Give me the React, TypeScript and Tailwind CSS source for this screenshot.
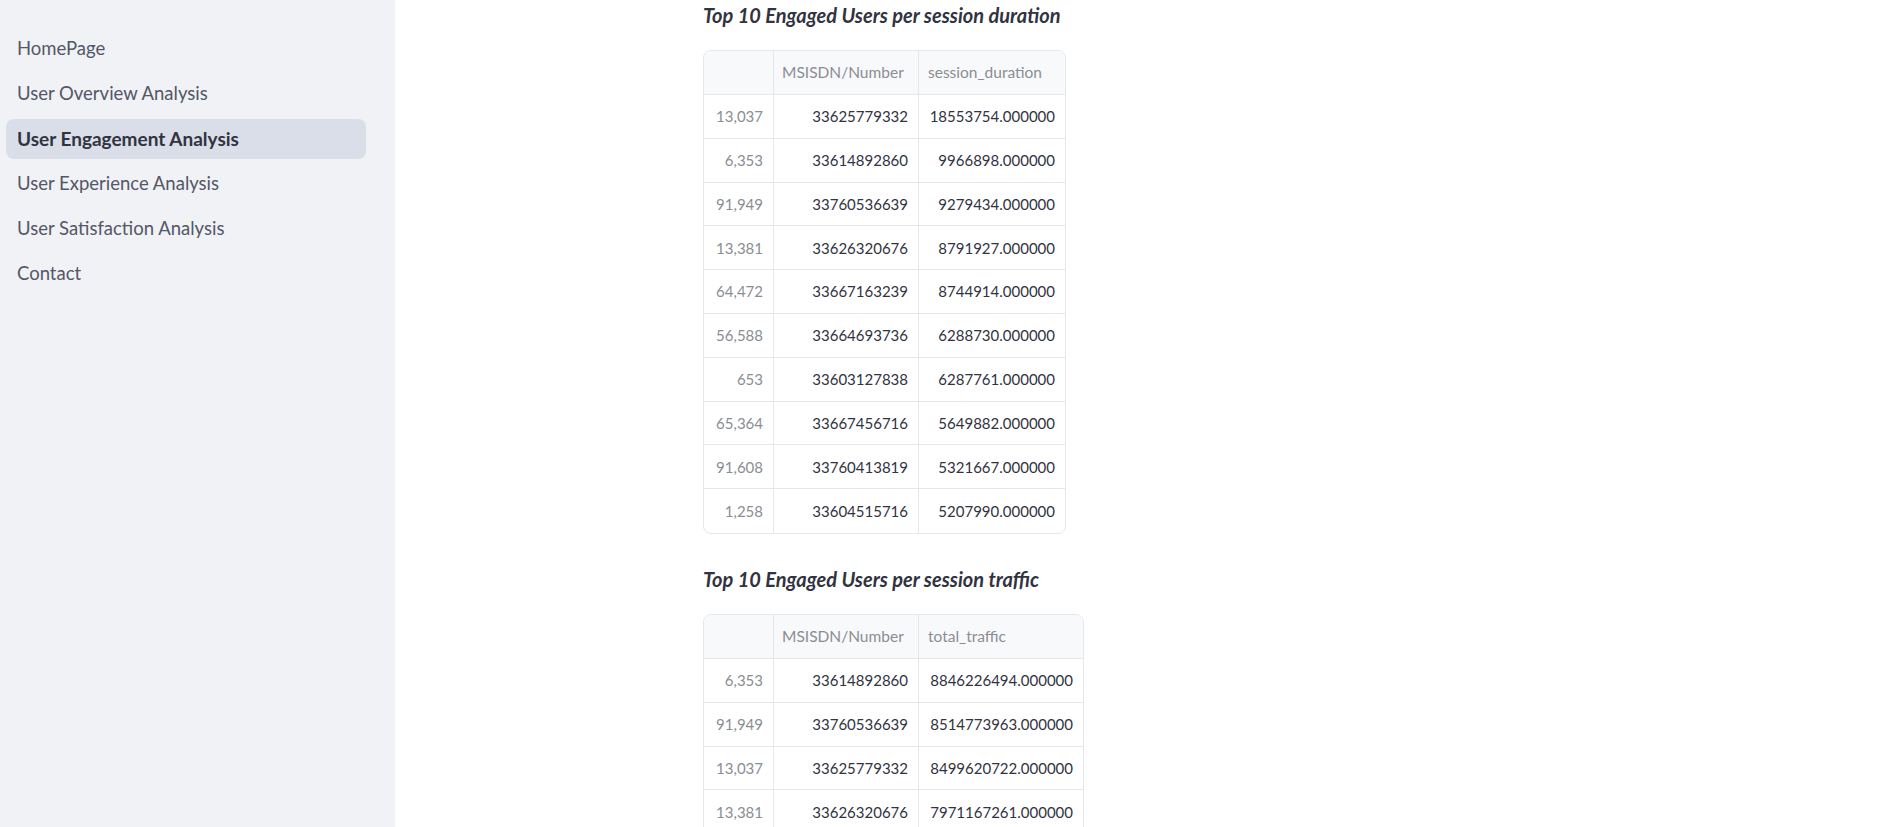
const navItems = [
  "HomePage",
  "User Overview Analysis",
  "User Engagement Analysis",
  "User Experience Analysis",
  "User Satisfaction Analysis",
  "Contact",
];

const durationRows = [
  ["13,037", "33625779332", "18553754.000000"],
  ["6,353", "33614892860", "9966898.000000"],
  ["91,949", "33760536639", "9279434.000000"],
  ["13,381", "33626320676", "8791927.000000"],
  ["64,472", "33667163239", "8744914.000000"],
  ["56,588", "33664693736", "6288730.000000"],
  ["653", "33603127838", "6287761.000000"],
  ["65,364", "33667456716", "5649882.000000"],
  ["91,608", "33760413819", "5321667.000000"],
  ["1,258", "33604515716", "5207990.000000"],
];

const trafficRows = [
  ["6,353", "33614892860", "8846226494.000000"],
  ["91,949", "33760536639", "8514773963.000000"],
  ["13,037", "33625779332", "8499620722.000000"],
  ["13,381", "33626320676", "7971167261.000000"],
  ["13,994", "33626951063", "7891110608.000000"],
  ["92,923", "33761273929", "7770043342.000000"],
  ["76,363", "33675877202", "7467498864.000000"],
  ["37,052", "33650730924", "7223375654.000000"],
  ["63,028", "33665986720", "7202029946.000000"],
  ["92,577", "33760992855", "6989489838.000000"],
];

const DataTable = ({
  column,
  rows,
  lastWidth,
}: {
  column: string;
  rows: string[][];
  lastWidth: string;
}) => (
  <div className="inline-block rounded-lg border border-[#e6e7ea] overflow-hidden bg-white text-[15px]">
    <div className="flex h-[44px] bg-[#f8f9fb] border-b border-[#e6e7ea] text-[#8b8d94] text-[15.5px]">
      <div className="w-[70px] border-r border-[#e6e7ea]" />
      <div className="w-[145px] border-r border-[#e6e7ea] flex items-center px-[8px]">
        MSISDN/Number
      </div>
      <div className={`${lastWidth} flex items-center px-[9px]`}>{column}</div>
    </div>
    {rows.map((r, i) => (
      <div
        key={i}
        className={`flex h-[43.8px] ${i < rows.length - 1 ? "border-b border-[#e6e7ea]" : ""}`}
      >
        <div className="w-[70px] border-r border-[#e6e7ea] flex items-center justify-end px-[10px] text-[#8b8d94]">
          {r[0]}
        </div>
        <div className="w-[145px] border-r border-[#e6e7ea] flex items-center justify-end px-[10px] text-[#31333f]">
          {r[1]}
        </div>
        <div className={`${lastWidth} flex items-center justify-end px-[10px] text-[#31333f]`}>
          {r[2]}
        </div>
      </div>
    ))}
  </div>
);

export default function App() {
  return (
    <div
      className="flex h-[827px] w-full overflow-hidden bg-white"
      style={{ fontFamily: "Lato, 'Noto Sans', sans-serif" }}
    >
      <aside className="w-[395px] shrink-0 bg-[#f0f2f6] pt-[29px] px-[6px]">
        <nav className="flex flex-col gap-[5px] w-[360px]">
          {navItems.map((item) => {
            const active = item === "User Engagement Analysis";
            return (
              <div
                key={item}
                className={`h-[40px] flex items-center px-[11px] rounded-lg ${
                  active
                    ? "bg-[#dadee8] font-bold text-[19px] text-[#31333f]"
                    : "text-[18.5px] text-[#545766]"
                }`}
              >
                {item}
              </div>
            );
          })}
        </nav>
      </aside>
      <main className="flex-1 flex justify-center">
        <div className="w-[874px]">
          <h3 className="h-[30px] flex items-center italic font-bold text-[20px] text-[#31333f]">
            Top 10 Engaged Users per session duration
          </h3>
          <div className="mt-[20px]">
            <DataTable column="session_duration" rows={durationRows} lastWidth="w-[146px]" />
          </div>
          <h3 className="mt-[24px] h-[30px] flex items-center italic font-bold text-[20px] text-[#31333f]">
            Top 10 Engaged Users per session traffic
          </h3>
          <div className="mt-[20px]">
            <DataTable column="total_traffic" rows={trafficRows} lastWidth="w-[164px]" />
          </div>
        </div>
      </main>
    </div>
  );
}
